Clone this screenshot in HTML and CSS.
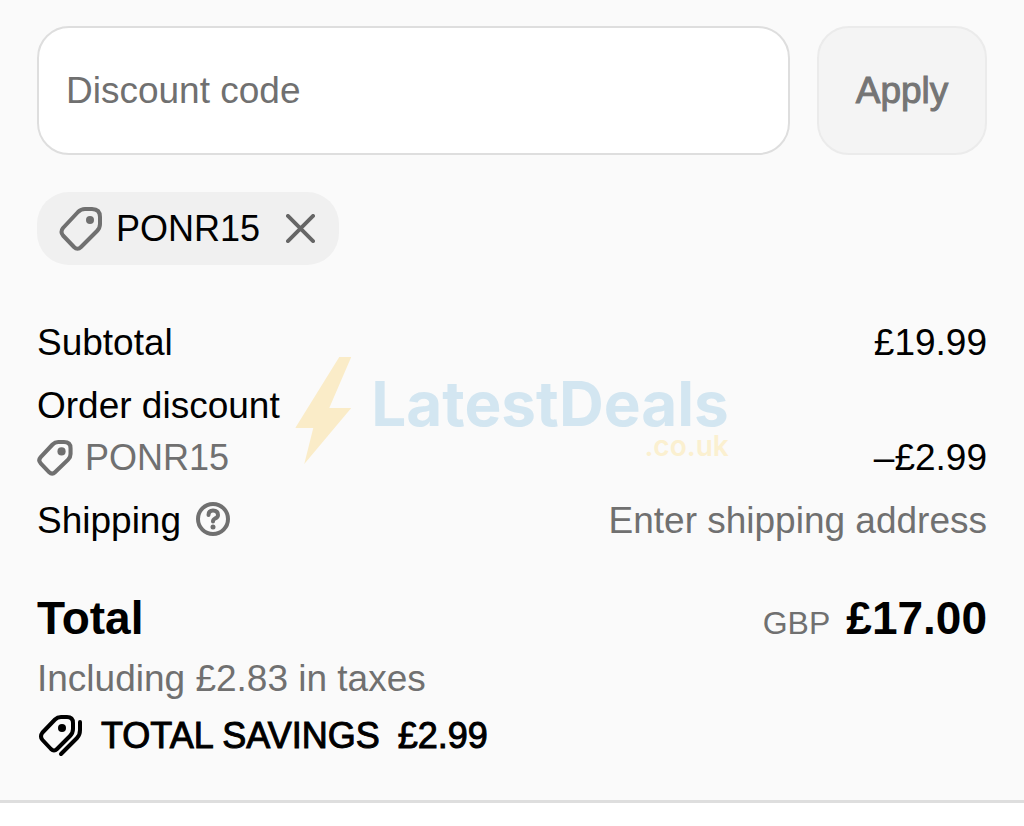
FILE: index.html
```html
<!DOCTYPE html>
<html lang="en">
<head>
    <meta charset="UTF-8">
    <meta name="viewport" content="width=device-width, initial-scale=1.0">
    <title>Order summary</title>
    <link rel="stylesheet" href="styles.css">
</head>
<body>

    <main class="summary">
        <!-- discount form -->
        <form class="discount-form">
            <input type="text" class="discount-input" placeholder="Discount code" aria-label="Discount code">
            <button type="button" class="apply-btn">Apply</button>
        </form>

        <!-- applied code -->
        <div class="chip">
            <svg class="chip-tag" viewBox="0 0 44 44" aria-hidden="true">
                <path class="line" d="M19 5 Q22 2 26 2 H33 Q41 2 41 10 V17 Q41 21 38 24 L22 40 Q18.500 43.500 15 40 L4 28.500 Q1 25 4 21 Z"/>
                <circle class="dot" cx="31" cy="13" r="4"/>
            </svg>
            <span class="chip-code">PONR15</span>
            <button type="button" class="remove-btn" aria-label="Remove PONR15">
                <svg viewBox="0 0 30 30" aria-hidden="true">
                    <path class="line" d="M2 2 L28 28 M28 2 L2 28"/>
                </svg>
            </button>
        </div>

        <!-- price lines -->
        <section class="lines">
            <div class="row">
                <span>Subtotal</span>
                <span>£19.99</span>
            </div>
            <div class="discount">
                <div class="row">Order discount</div>
                <div class="row">
                    <span class="code">
                        <svg class="small-tag" viewBox="0 0 44 44" aria-hidden="true">
                            <path class="line" d="M19 5.500 Q22 2.500 26 2.500 H33 Q41 2.500 41 10 V17 Q41 21 38 24 L22 39.500 Q18.500 43 15 39.500 L4.500 28.500 Q1 25 4.500 21 Z"/>
                            <circle class="dot" cx="30" cy="14" r="5"/>
                        </svg>
                        PONR15
                    </span>
                    <span>–£2.99</span>
                </div>
            </div>
            <div class="row">
                <span class="shipping">
                    Shipping
                    <button type="button" class="help-btn" aria-label="Shipping help">
                        <svg viewBox="0 0 34 34" aria-hidden="true">
                            <circle class="line" cx="17" cy="17" r="15"/>
                            <path class="line" d="M12.500 13 Q12.500 8.500 17 8.500 Q22 8.500 22 13 Q22 15.500 19 16.500 Q17 17.500 17 19.500"/>
                            <circle class="dot" cx="17" cy="25" r="2.500"/>
                        </svg>
                    </button>
                </span>
                <span class="muted">Enter shipping address</span>
            </div>
        </section>

        <!-- total -->
        <section class="total">
            <div class="total-row">
                <strong>Total</strong>
                <span><span class="currency">GBP</span><strong>£17.00</strong></span>
            </div>
            <p class="muted">Including £2.83 in taxes</p>
            <div class="savings">
                <svg class="savings-icon" viewBox="0 0 46 42" aria-hidden="true">
                    <path class="line" d="M18 4.500 Q20.500 2 24 2 H30 Q36 2 36 8 V14 Q36 18 33 21 L20 34 Q17 37 14 34 L5.500 25 Q2.500 21.500 5.500 17.500 Z"/>
                    <path class="line" d="M43 7 V15 Q43 20 40 23 L24 39"/>
                    <circle class="dot" cx="25" cy="13" r="4"/>
                </svg>
                <span>TOTAL SAVINGS</span>
                <span>£2.99</span>
            </div>
        </section>

        <!-- watermark -->
        <div class="watermark">
            <svg class="bolt" viewBox="0 0 56 108" aria-hidden="true">
                <path d="M44 0 H56 L34 51 H56 L9 107 L18 71 H0 Z"/>
            </svg>
            <div class="brand">
                <div class="brand-name">LatestDeals</div>
                <div class="brand-domain">.co.uk</div>
            </div>
        </div>
    </main>

</body>
</html>
```
FILE: styles.css
```css
*{
    margin: 0;
    padding: 0;
    box-sizing: border-box;
}
body{
    font-family: "Liberation Sans", Arial, sans-serif;
    font-size: 37px;
    line-height: 43px;
    color: #000;
    background: #fff;
}
button,input{
    font: inherit;
}
svg{
    display: block;
    flex: none;
}
.line{
    fill: none;
    stroke: currentColor;
    stroke-width: 4;
    stroke-linecap: round;
    stroke-linejoin: round;
}
.dot{
    fill: currentColor;
}
.muted{
    color: #707070;
}
.summary{
    position: relative;
    padding: 26px 37px 43px;
    background: #fafafa;
    border-bottom: 3px solid #dedede;
}

/* discount form */
.discount-form{
    display: flex;
    gap: 27px;
}
.discount-input{
    flex: 1;
    min-width: 0;
    height: 129px;
    padding: 0 27px;
    background: #fff;
    border: 2px solid #dedede;
    border-radius: 32px;
}
.discount-input::placeholder{
    color: #707070;
    opacity: 1;
}
.apply-btn{
    width: 170px;
    color: #757575;
    background: #f4f4f4;
    border: 2px solid #ebebeb;
    border-radius: 32px;
    -webkit-text-stroke: 1px;
}

/* applied code */
.chip{
    display: inline-flex;
    align-items: center;
    height: 73px;
    margin-top: 37px;
    padding: 0 24px 0 22px;
    background: #f0f0f0;
    border-radius: 32px;
}
.chip-tag{
    width: 44px;
    height: 44px;
    margin-right: 13px;
    color: #707070;
}
.chip-code,.code{
    font-size: 36px;
}
.remove-btn{
    margin-left: 26px;
    border: none;
    background: none;
    color: #666;
    cursor: pointer;
}
.remove-btn svg{
    width: 29px;
    height: 29px;
}

/* price lines */
.lines{
    display: flex;
    flex-direction: column;
    gap: 20px;
    margin-top: 56px;
}
.row{
    display: flex;
    justify-content: space-between;
}
.discount{
    display: grid;
    gap: 9px;
}
.code,.shipping{
    display: flex;
    align-items: center;
}
.code{
    gap: 12px;
    color: #707070;
}
.small-tag{
    width: 36px;
    height: 36px;
}
.small-tag .line{
    stroke-width: 5;
}
.shipping{
    gap: 15px;
}
.help-btn{
    padding-bottom: 3px;
    border: none;
    background: none;
    color: #707070;
    cursor: pointer;
}
.help-btn svg{
    width: 34px;
    height: 34px;
}

/* total */
.total{
    margin-top: 48px;
}
.total-row{
    display: flex;
    justify-content: space-between;
    font-size: 46px;
    line-height: 56px;
}
.currency{
    margin-right: 16px;
    font-size: 32px;
    color: #707070;
}
.total .muted{
    margin-top: 6px;
}
.savings{
    display: flex;
    align-items: center;
    gap: 18px;
    margin-top: 14px;
    font-size: 36px;
    -webkit-text-stroke: 1px;
}
.savings-icon{
    width: 46px;
    height: 42px;
}

/* watermark */
.watermark{
    position: absolute;
    top: 357px;
    left: 50%;
    display: flex;
    gap: 20px;
    transform: translateX(-50%);
    font-family: Inter, sans-serif;
    pointer-events: none;
}
.bolt{
    width: 56px;
    height: 108px;
    fill: #faecc8;
}
.brand{
    padding-top: 20px;
    text-align: right;
}
.brand-name{
    font-size: 62px;
    font-weight: 700;
    line-height: 54px;
    color: #d3e6f1;
}
.brand-domain{
    font-size: 28px;
    font-weight: 600;
    line-height: 30px;
    color: #fbf0d0;
}
```
